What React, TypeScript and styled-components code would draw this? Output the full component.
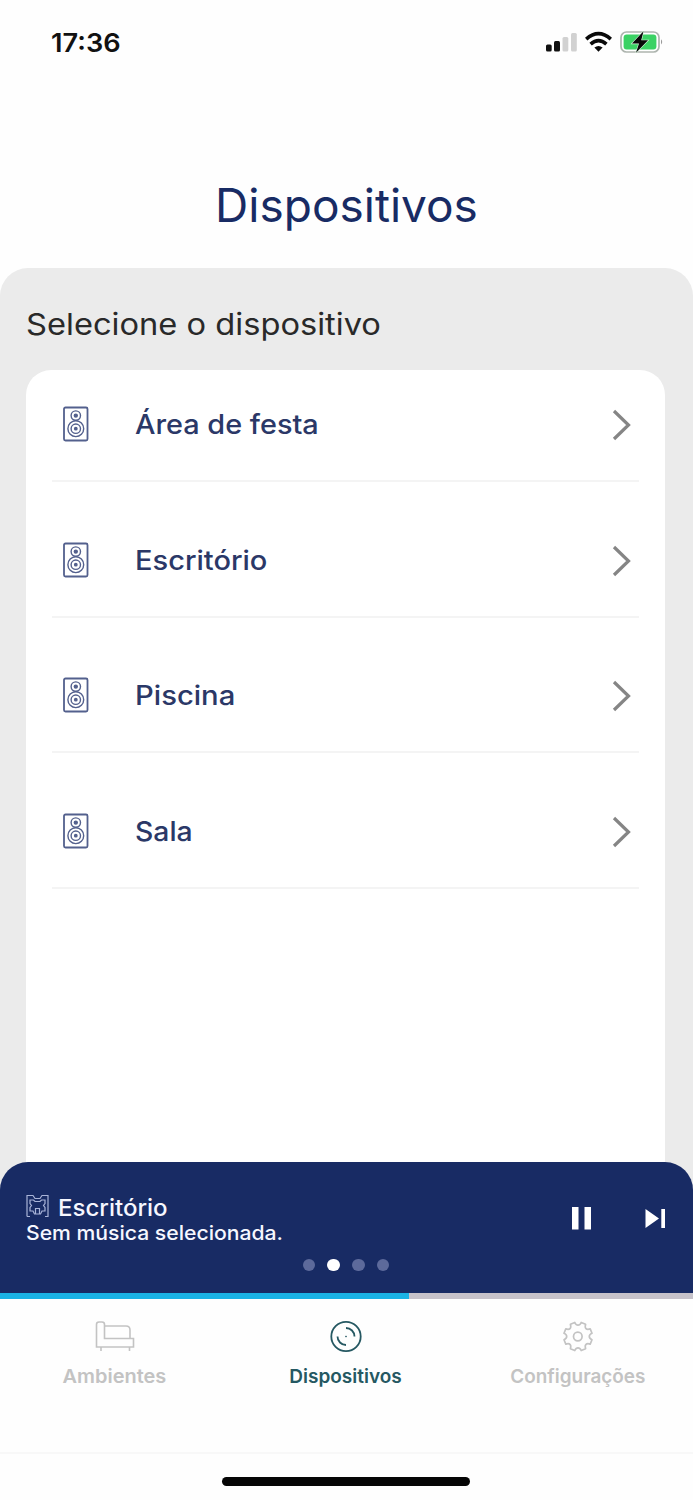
import React from "react";
import styled, { createGlobalStyle } from "styled-components";

const GlobalStyle = createGlobalStyle`
  * { box-sizing: border-box; }
  body { margin: 0; background: #fff; font-family: Inter, "Liberation Sans", sans-serif; }
`;

const navy = "#182b64";

const Screen = styled.div`
  width: 693px;
  height: 1500px;
  display: flex;
  flex-direction: column;
  background: #fefefe;
  overflow: hidden;
`;

const Wide = styled.span<{ $scale: number; $center?: boolean }>`
  display: inline-block;
  white-space: nowrap;
  transform: scaleX(${(p) => p.$scale});
  transform-origin: ${(p) => (p.$center ? "center" : "left")};
`;

const StatusBar = styled.header`
  height: 142px;
  padding: 27px 28px 0 51px;
  display: flex;
  align-items: flex-start;
  justify-content: space-between;
`;

const Clock = styled.time`
  font-size: 26px;
  font-weight: 600;
  line-height: 31px;
  color: #111;
`;

const StatusIcons = styled.svg`
  width: 120px;
  height: 30px;
  display: block;
`;

const Title = styled.h1`
  height: 126px;
  margin: 0;
  padding-top: 35px;
  text-align: center;
  font-size: 46px;
  line-height: 56px;
  font-weight: 400;
  color: ${navy};
`;

const Panel = styled.main`
  height: 925px;
  padding: 0 28px 0 26px;
  display: flex;
  flex-direction: column;
  border-radius: 28px 28px 0 0;
  background: #ebebeb;
`;

const PanelHeading = styled.h2`
  height: 102px;
  margin: 0;
  padding: 37px 0 0 0;
  font-size: 30px;
  line-height: 38px;
  font-weight: 400;
  color: #292929;
`;

const DeviceList = styled.ul`
  flex: 1;
  margin: 0;
  padding: 0 26px;
  list-style: none;
  border-radius: 25px 25px 0 0;
  background: #fff;
`;

const DeviceRow = styled.li`
  height: 135.5px;
  padding: 24px 7px 0 10px;
  display: flex;
  align-items: center;
  border-bottom: 2px solid #f4f4f4;
  &:first-child { height: 112px; padding-top: 0; }
`;

const SpeakerIcon = styled.svg`
  width: 28px;
  height: 38px;
  flex: none;
  margin-bottom: 2px;
`;

const DeviceName = styled.span`
  flex: 1;
  margin-left: 45px;
  font-size: 27px;
  line-height: 34px;
  font-weight: 500;
  color: #2b3867;
`;

const Chevron = styled.svg`
  width: 20px;
  height: 32px;
  flex: none;
`;

const Backdrop = styled.div`
  background: linear-gradient(90deg, #ebebeb 0 26px, #fff 26px 665px, #ebebeb 665px);
  margin-top: -31px;
`;

const Player = styled.section`
  height: 131px;
  display: grid;
  grid-template-columns: 1fr auto;
  grid-template-rows: 91px 24px;
  padding: 0 27px 0 26px;
  border-radius: 28px 28px 0 0;
  background: ${navy};
  color: #f6f7ff;
`;

const TrackInfo = styled.div`
  padding-top: 31px;
`;

const RoomLine = styled.div`
  height: 28px;
  display: flex;
  align-items: center;
  gap: 9px;
  font-size: 23px;
  font-weight: 500;
  svg { margin-bottom: 2px; }
  span { margin-top: 1px; }
`;

const TrackLine = styled.div`
  margin-top: -1px;
  font-size: 20px;
  line-height: 26px;
  font-weight: 500;
`;

const Controls = styled.svg`
  width: 98px;
  height: 30px;
  margin-top: 41px;
`;

const Pager = styled.div`
  grid-column: 1 / 3;
  display: flex;
  justify-content: center;
  align-items: center;
  gap: 12px;
`;

const Dot = styled.i<{ $active?: boolean }>`
  width: 12.7px;
  height: 12.7px;
  border-radius: 50%;
  background: ${(p) => (p.$active ? "#fff" : "#5d6a9b")};
`;

const Progress = styled.div`
  height: 6px;
  background: #c6c2ca;
`;

const Elapsed = styled.div`
  width: 409px;
  height: 100%;
  background: #1ab3e5;
`;

const Tabs = styled.nav`
  height: 155px;
  display: grid;
  grid-template-columns: 229px 233px 231px;
  border-bottom: 2px solid #f8f8f8;
`;

const Tab = styled.a<{ $active?: boolean }>`
  display: flex;
  flex-direction: column;
  align-items: center;
  padding-top: 17px;
  color: ${(p) => (p.$active ? "#255862" : "#c3c3c3")};
  svg { width: 42px; height: 40px; }
`;

const TabLabel = styled.span`
  margin-top: 8px;
  font-size: 19px;
  line-height: 26px;
  font-weight: 600;
`;

const HomeArea = styled.footer`
  height: 46px;
  display: flex;
  justify-content: center;
  padding: 23px 1px 0 0;
`;

const HomeIndicator = styled.div`
  width: 248px;
  height: 9px;
  border-radius: 5px;
  background: #050505;
`;

const devices = [
  { name: "Área de festa", scale: 1.068 },
  { name: "Escritório", scale: 1.075 },
  { name: "Piscina", scale: 1.083 },
  { name: "Sala", scale: 1.05 },
];

function Speaker() {
  return (
    <SpeakerIcon viewBox="0 0 28 38" fill="none" stroke="#53608d" strokeWidth="1.4">
      <rect x="2" y="2.5" width="23.5" height="33" rx="1.5" strokeWidth="1.8" />
      <circle cx="13.8" cy="10.6" r="4.7" />
      <circle cx="13.8" cy="10.6" r="1.5" fill="#53608d" />
      <circle cx="13.8" cy="23.7" r="7.9" />
      <circle cx="13.8" cy="23.7" r="4.7" />
      <circle cx="13.8" cy="23.7" r="1.2" fill="#53608d" />
    </SpeakerIcon>
  );
}

export default function App() {
  return (
    <>
      <GlobalStyle />
      <Screen>
        <StatusBar>
          <Clock><Wide $scale={1.045}>17:36</Wide></Clock>
          <StatusIcons viewBox="545 27 120 30">
            <rect x="546" y="44.5" width="5.7" height="7" rx="1.5" fill="#111" />
            <rect x="554" y="41" width="6" height="10.5" rx="1.5" fill="#111" />
            <rect x="562.5" y="37" width="5.8" height="14.5" rx="1.5" fill="#d1d1d1" />
            <rect x="571" y="33" width="5.8" height="18.5" rx="1.5" fill="#d1d1d1" />
            <g fill="none" stroke="#090909" strokeWidth="3.6">
              <path d="M586.2 39.1Q598.5 28.2 610.8 39.1" />
              <path d="M590.6 44.1Q598.5 37.1 606.4 44.1" />
            </g>
            <path d="M594.4 47.6Q598.5 44.4 602.6 47.6L598.5 51.7Z" fill="#090909" />
            <rect x="621" y="32" width="38" height="20" rx="5.5" fill="#fff" stroke="#aeb5af" strokeWidth="1.7" />
            <rect x="623.6" y="34.5" width="32.8" height="15" rx="3" fill="#3bd264" />
            <path d="M661 39.2q2.4 2.6 0 5.4z" fill="#9b9b9b" />
            <path d="M643.5 31.3L632 43.6H639L636 52.7L648 40.3H641.2Z" fill="#080808" stroke="#d9f5df" strokeWidth="1.2" paintOrder="stroke" />
          </StatusIcons>
        </StatusBar>
        <Title><Wide $scale={1} $center>Dispositivos</Wide></Title>
        <Panel>
          <PanelHeading><Wide $scale={1.088}>Selecione o dispositivo</Wide></PanelHeading>
          <DeviceList>
            {devices.map((d) => (
              <DeviceRow key={d.name}>
                <Speaker />
                <DeviceName><Wide $scale={d.scale}>{d.name}</Wide></DeviceName>
                <Chevron viewBox="0 0 20 32" fill="none" stroke="#858585" strokeWidth="3.2">
                  <path d="M2 2L16.5 16L2 30" />
                </Chevron>
              </DeviceRow>
            ))}
          </DeviceList>
        </Panel>
        <Backdrop>
          <Player>
            <TrackInfo>
              <RoomLine>
                <svg width="23" height="24" viewBox="0 0 23 24" fill="none" stroke="#a9b4d8" strokeWidth="1.2">
                  <path d="M1 22.5V1.5H7L9 4.5H14L16 1.5H22V22.5H19M1 22.5H4" />
                  <path d="M4 6H7.5L9 7.5H14L15.5 6H19V9.5L17.5 11.5L19 13.5V17H16L14.5 20H8.5L7 17H4V13.5L5.5 11.5L4 9.5Z" />
                  <path d="M9.5 20V14.5H13.5V20" />
                </svg>
                <Wide $scale={1.045}>Escritório</Wide>
              </RoomLine>
              <TrackLine><Wide $scale={1.058}>Sem música selecionada.</Wide></TrackLine>
            </TrackInfo>
            <Controls viewBox="568 1203 98 30" fill="#fff">
              <path d="M572 1207h6.5v22.5H572zM584.5 1207h6.5v22.5h-6.5zM645.5 1209L659 1218.5L645.5 1228zM661.3 1209h3.7v19h-3.7z" />
            </Controls>
            <Pager><Dot /><Dot $active /><Dot /><Dot /></Pager>
          </Player>
        </Backdrop>
        <Progress><Elapsed /></Progress>
        <Tabs>
          <Tab>
            <svg viewBox="0 0 42 40" fill="none" stroke="currentColor" strokeWidth="1.6">
              <path d="M2.5 31V8.5Q2.5 6 5 6H8Q10.5 6 10.5 8.5V22.5H39.5V31ZM10.5 10H32Q36 10 36 14V22.5M7 31V35M35.5 31V35" />
            </svg>
            <TabLabel><Wide $center $scale={1.05}>Ambientes</Wide></TabLabel>
          </Tab>
          <Tab $active>
            <svg viewBox="0 0 42 40" fill="none" stroke="currentColor" strokeWidth="1.8">
              <circle cx="21" cy="20.5" r="14.7" />
              <path d="M21 12A8.5 8.5 0 0 1 29.5 20.5M12.5 20.5A8.5 8.5 0 0 0 21 29" />
              <circle cx="21" cy="20.5" r="0.5" strokeWidth="1" />
            </svg>
            <TabLabel><Wide $center $scale={1}>Dispositivos</Wide></TabLabel>
          </Tab>
          <Tab>
            <svg viewBox="0 0 42 40" fill="none" stroke="currentColor" strokeWidth="1.7" strokeLinejoin="round">
              <path d="M21 9.2Q23 9.2 24.2 6.5L28.6 8.3Q27.7 11.4 29 12.6Q30.2 13.9 33.2 12.9L35 17.3Q32.3 18.5 32.3 20.5Q32.3 22.5 35 23.7L33.2 28.1Q30.2 27.1 29 28.4Q27.7 29.6 28.6 32.7L24.2 34.5Q23 31.8 21 31.8Q19 31.8 17.8 34.5L13.4 32.7Q14.3 29.6 13 28.4Q11.8 27.1 8.8 28.1L7 23.7Q9.7 22.5 9.7 20.5Q9.7 18.5 7 17.3L8.8 12.9Q11.8 13.9 13 12.6Q14.3 11.4 13.4 8.3L17.8 6.5Q19 9.2 21 9.2Z" />
              <circle cx="20.8" cy="20.5" r="4.3" />
            </svg>
            <TabLabel><Wide $center $scale={0.995}>Configurações</Wide></TabLabel>
          </Tab>
        </Tabs>
        <HomeArea><HomeIndicator /></HomeArea>
      </Screen>
    </>
  );
}
